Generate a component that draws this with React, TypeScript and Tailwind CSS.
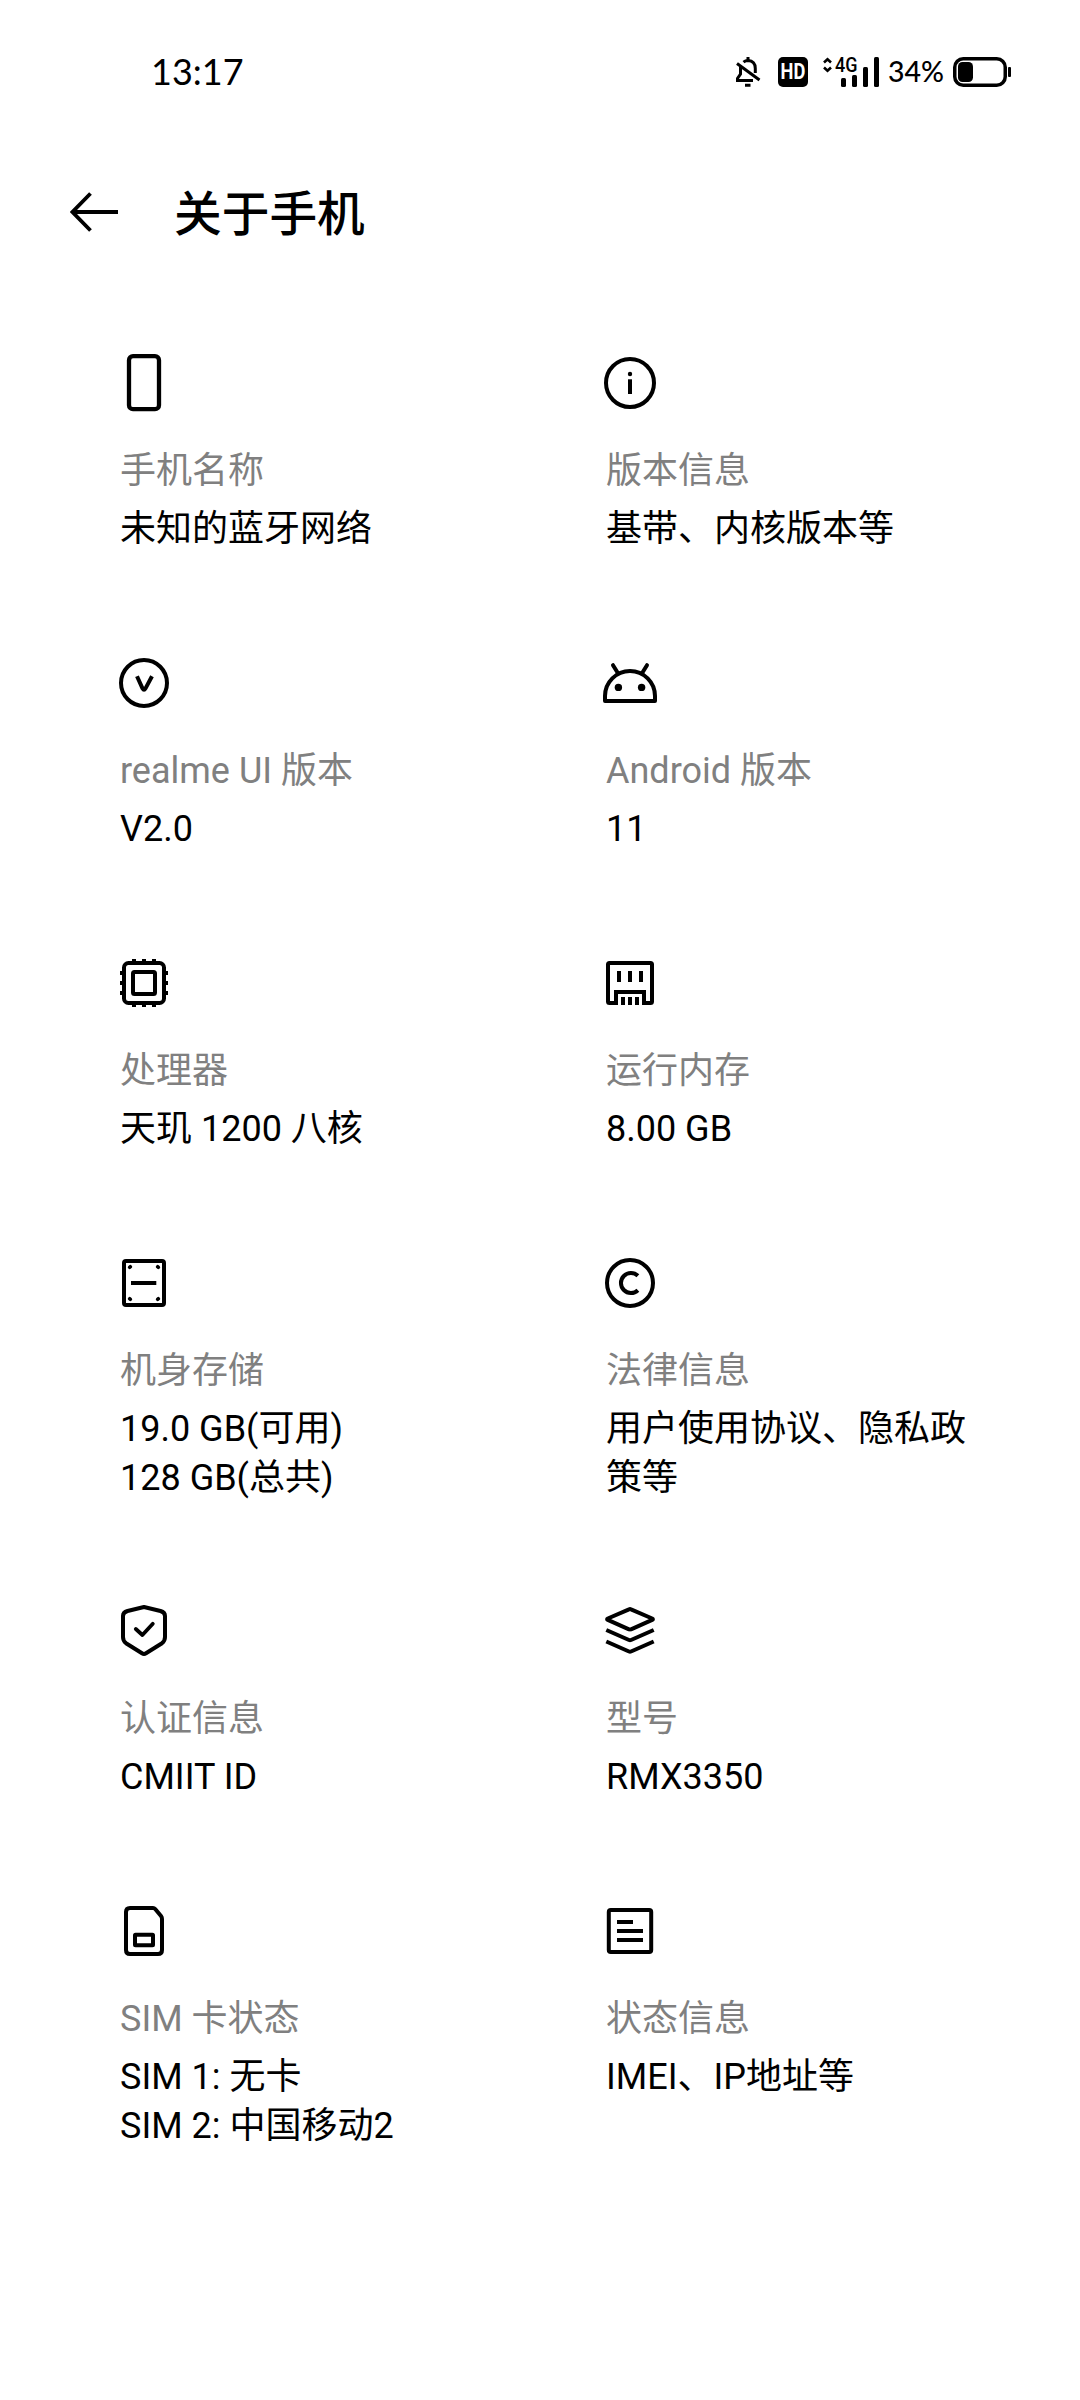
import type { ReactNode } from 'react';

type Item = { icon: ReactNode; label: string; lines: string[] };

function Icon({ children }: { children: ReactNode }) {
  return (
    <svg
      className="-ml-1.5 block h-[60px] w-[60px]"
      viewBox="0 0 60 60"
      fill="none"
      stroke="black"
      strokeWidth="4"
      strokeLinejoin="round"
    >
      {children}
    </svg>
  );
}

const PhoneIcon = (
  <Icon>
    <rect x="15" y="3.2" width="30" height="53" rx="4" strokeWidth="4.3" />
  </Icon>
);

const InfoIcon = (
  <Icon>
    <circle cx="30" cy="30" r="24" />
    <circle cx="30" cy="21" r="2.2" fill="black" stroke="none" />
    <path d="M30 26.3V41" />
  </Icon>
);

const VersionIcon = (
  <Icon>
    <circle cx="30" cy="30" r="23" />
    <path d="M23 23.2L28.6 35.6Q30 38 31.4 35.6L38 23.2" />
  </Icon>
);

const AndroidIcon = (
  <Icon>
    <path d="M5 48V43A25 25 0 0 1 55 43V48Z" />
    <path d="M13 12.2L18 20.3M47 12.2L42 20.3" strokeLinecap="round" />
    <circle cx="18.4" cy="34.4" r="3.7" fill="black" stroke="none" />
    <circle cx="41.6" cy="34.4" r="3.7" fill="black" stroke="none" />
  </Icon>
);

const ChipIcon = (
  <Icon>
    <rect x="10" y="10" width="40" height="40" rx="4.5" />
    <rect x="19" y="19" width="22" height="22" rx="1.5" />
    <path d="M20 6V10M30 6V10M40 6V10M20 50V54M30 50V54M40 50V54M6 20H10M6 30H10M6 40H10M50 20H54M50 30H54M50 40H54" />
  </Icon>
);

const MemoryIcon = (
  <Icon>
    <path
      d="M16 50V39H44V50H50.5Q52 50 52 48.5V11.5Q52 10 50.5 10H9.5Q8 10 8 11.5V48.5Q8 50 9.5 50Z"
      strokeLinejoin="miter"
    />
    <path d="M19 18V29M30 18V29M41 18V29M23 44V52M30 44V52M37 44V52" />
  </Icon>
);

const StorageIcon = (
  <Icon>
    <rect x="10" y="8" width="40" height="44" rx="2" />
    <path d="M17 30H42.3" />
    <path
      d="M15.7 14.3L16.3 13.7M43.7 13.7L44.3 14.3M15.7 45.7L16.3 46.3M43.7 46.3L44.3 45.7"
      strokeLinecap="round"
      strokeWidth="3.6"
    />
  </Icon>
);

const CopyrightIcon = (
  <Icon>
    <circle cx="30" cy="30" r="23" />
    <path d="M37.9 22.8A10 10 0 1 0 37.9 37.2" />
  </Icon>
);

const ShieldIcon = (
  <Icon>
    <path d="M30 6L46.5 10Q51 11.3 51 15V36Q51 40 48 42.2L32 52.3Q30 53.6 28 52.3L12 42.2Q9 40 9 36V15Q9 11.3 13.5 10Z" />
    <path d="M21.8 28L28.4 34L38.8 22.8" strokeLinecap="round" strokeWidth="3.8" />
  </Icon>
);

const LayersIcon = (
  <Icon>
    <path d="M29 8.3Q30 7.8 31 8.3L52.2 17.5Q53.6 18.2 52.2 18.9L31 28.3Q30 28.8 29 28.3L7.8 18.9Q6.4 18.2 7.8 17.5Z" />
    <path d="M6.3 29L29 39Q30 39.4 31 39L53.7 29M6.3 40.5L29 50.5Q30 50.9 31 50.5L53.7 40.5" />
  </Icon>
);

const SimIcon = (
  <Icon>
    <path d="M16 7H39Q40.3 7 41.2 8L47 15Q48 16.3 48 18V49Q48 53 44 53H16Q12 53 12 49V11Q12 7 16 7Z" />
    <rect x="21" y="33.8" width="18" height="10.4" rx="0.5" />
  </Icon>
);

const StatusIcon = (
  <Icon>
    <rect x="8.8" y="9" width="42.4" height="42" rx="2" />
    <path d="M17 21H33M17 30H43M17 39H43" />
  </Icon>
);

const rows: [Item, Item][] = [
  [
    { icon: PhoneIcon, label: '手机名称', lines: ['未知的蓝牙网络'] },
    { icon: InfoIcon, label: '版本信息', lines: ['基带、内核版本等'] },
  ],
  [
    { icon: VersionIcon, label: 'realme UI 版本', lines: ['V2.0'] },
    { icon: AndroidIcon, label: 'Android 版本', lines: ['11'] },
  ],
  [
    { icon: ChipIcon, label: '处理器', lines: ['天玑 1200 八核'] },
    { icon: MemoryIcon, label: '运行内存', lines: ['8.00 GB'] },
  ],
  [
    { icon: StorageIcon, label: '机身存储', lines: ['19.0 GB(可用)', '128 GB(总共)'] },
    { icon: CopyrightIcon, label: '法律信息', lines: ['用户使用协议、隐私政策等'] },
  ],
  [
    { icon: ShieldIcon, label: '认证信息', lines: ['CMIIT ID'] },
    { icon: LayersIcon, label: '型号', lines: ['RMX3350'] },
  ],
  [
    { icon: SimIcon, label: 'SIM 卡状态', lines: ['SIM 1: 无卡', 'SIM 2: 中国移动2'] },
    { icon: StatusIcon, label: '状态信息', lines: ['IMEI、IP地址等'] },
  ],
];

function Cell({ item }: { item: Item }) {
  return (
    <div className="w-[372px]">
      {item.icon}
      <div className="mt-[34px] leading-[49px] text-[#808080]">{item.label}</div>
      <div className="mt-[9px] leading-[49px] text-black">
        {item.lines.map((line) => (
          <div key={line}>{line}</div>
        ))}
      </div>
    </div>
  );
}

function StatusBar() {
  return (
    <div className="flex h-[144px] items-center pr-[69px] pl-[151px] text-black">
      <span className="-mt-0.5 font-['Lato',sans-serif] text-[36px] leading-[44px]">13:17</span>
      <div className="ml-auto flex items-center">
        {/* muted bell */}
        <svg className="h-[30px] w-[26px]" viewBox="0 0 26 30" fill="none" stroke="black" strokeWidth="3">
          <path d="M8.5 5.2Q10.5 3.5 13 3.5Q20.3 4 20.3 11.5V16M5.5 10V17L2.5 21.5V23.5H18" />
          <path d="M2 6.500L24.5 23" />
          <path d="M13 0V3M10 28.3H15.5" />
        </svg>
        <div className="ml-[17px] flex h-[30px] w-[30px] items-center justify-center rounded-[5px] bg-black">
          <span className="scale-x-[0.83] text-[22px] leading-[30px] font-bold text-white">HD</span>
        </div>
        {/* network type and signal bars */}
        <svg className="ml-[15px] h-[30px] w-[56px] overflow-visible" viewBox="0 0 56 30">
          <path
            d="M1 5.5L4.5 2.3L8 5.5M1 10.5L4.5 13.7L8 10.5"
            fill="none"
            stroke="black"
            strokeWidth="2.6"
          />
          <text
            x="12"
            y="15"
            fontFamily="Roboto, sans-serif"
            fontWeight="500"
            fontSize="19.5"
            textLength="22.5"
            lengthAdjust="spacingAndGlyphs"
          >
            4G
          </text>
          <rect x="18" y="21" width="5" height="9" rx="1.5" />
          <rect x="29" y="18" width="5" height="12" rx="1.5" />
          <rect x="40" y="10" width="5" height="20" rx="1.5" />
          <rect x="51" y="0" width="5" height="30" rx="1.5" />
        </svg>
        <span className="-mt-0.5 ml-[9px] w-[65px] font-['Lato',sans-serif] text-[28.5px] leading-[36px] font-medium">
          34%
        </span>
        <svg className="h-[30px] w-[58px]" viewBox="0 0 58 30">
          <rect x="1.75" y="1.75" width="50.5" height="26.5" rx="8.5" fill="none" stroke="black" strokeWidth="3.5" />
          <rect x="5" y="5" width="15" height="20" rx="4.5" />
          <rect x="55" y="10" width="3" height="10" rx="1" />
        </svg>
      </div>
    </div>
  );
}

export default function App() {
  return (
    <div className="h-[2400px] w-[1080px] overflow-hidden bg-white font-['Roboto','Noto_Sans_CJK_SC',sans-serif]">
      <StatusBar />
      <header className="flex h-[136px] items-center pl-[70px]">
        <svg className="h-10 w-12" viewBox="0 0 48 40" fill="none" stroke="black" strokeWidth="3.8">
          <path d="M48 20H2.5M20.5 1.5L2.5 20L20.5 38.5" />
        </svg>
        <h1 className="mt-[5px] ml-[56px] text-[47.7px] leading-[56px] font-medium text-black">关于手机</h1>
      </header>
      <main className="mt-[73px] text-[36px]">
        {rows.map((row) => (
          <section
            key={row[0].label}
            className={row[0].lines.length > 1 ? 'mb-[98px] flex pl-[120px]' : 'mb-[99px] flex pl-[120px]'}
          >
            <Cell item={row[0]} />
            <div className="ml-[114px]">
              <Cell item={row[1]} />
            </div>
          </section>
        ))}
      </main>
    </div>
  );
}
